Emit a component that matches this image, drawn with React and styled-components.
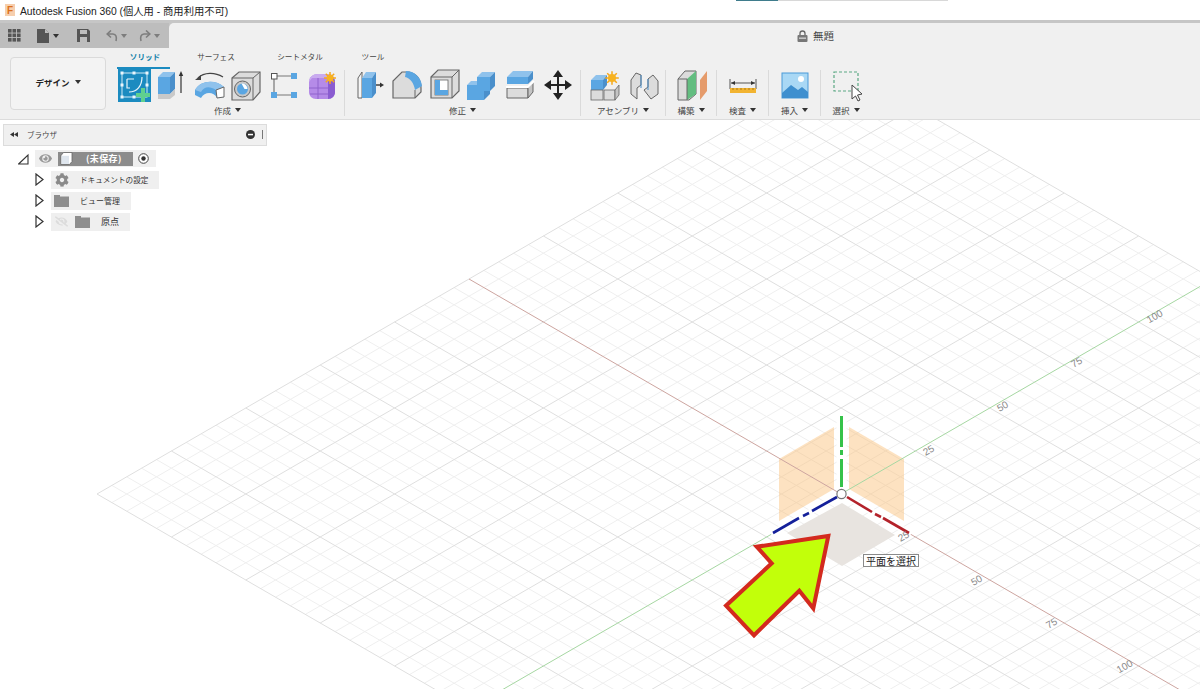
import React from "react";
import styled, { createGlobalStyle } from "styled-components";
import { FaCog, FaEye, FaEyeSlash } from "react-icons/fa";

const FONT = `"Noto Sans CJK JP", "Noto Sans", sans-serif`;

const GlobalStyle = createGlobalStyle`
  html, body {
    margin: 0;
    padding: 0;
    background: #fff;
  }
  body {
    font-family: ${FONT};
    color: #333;
  }
`;

const Page = styled.div`
  width: 1200px;
  height: 689px;
  display: flex;
  flex-direction: column;
  overflow: hidden;
  background: #fff;
`;

/* window title */
const TitleBar = styled.div`
  height: 20px;
  flex: none;
  position: relative;
  display: flex;
  align-items: center;
  gap: 5px;
  padding-left: 5px;
  background: #fff;
`;

const AppLogo = styled.div`
  width: 10px;
  height: 12px;
  display: flex;
  align-items: center;
  justify-content: center;
  background: #f6cfae;
  color: #dd6f1c;
  font: bold 10px "Liberation Sans", sans-serif;
`;

const WindowTitle = styled.div`
  font: 10.3px "Liberation Sans", "Noto Sans CJK JP", sans-serif;
  color: #222;
  white-space: nowrap;
`;

const TopEdge = styled.div`
  position: absolute;
  top: 0;
  left: 736px;
  width: 212px;
  height: 1px;
  background: #d8d8d8;
  &::before {
    content: "";
    display: block;
    width: 42px;
    height: 1px;
    background: #3f7c8c;
  }
`;

/* quick access row */
const QuickRow = styled.div`
  height: 28px;
  flex: none;
  display: flex;
  background: #c6c6c6;
`;

const QuickTools = styled.div`
  width: 169px;
  flex: none;
  padding-top: 3px;
  display: flex;
  align-items: center;
  background: linear-gradient(#c6c6c6 0 3px, #bdbdbd 3px);
`;

const QuickItem = styled.div`
  display: flex;
  align-items: center;
  gap: 3px;
  margin-left: ${(p) => p.$left}px;
`;

const Caret = styled.span`
  display: inline-block;
  width: 0;
  height: 0;
  border-left: 3px solid transparent;
  border-right: 3px solid transparent;
  border-top: 4px solid ${(p) => p.$color || "#333"};
`;

const DocTitleArea = styled.div`
  flex: 1;
  margin-top: 3px;
  padding-left: 628px;
  display: flex;
  align-items: center;
  gap: 5px;
  background: #f0f0f0;
  border-top-left-radius: 5px;
  font-size: 10.5px;
  color: #444;
`;

/* ribbon */
const Ribbon = styled.div`
  height: 71px;
  flex: none;
  display: flex;
  align-items: flex-start;
  padding-left: 10px;
  background: #f0f0f0;
  border-bottom: 1px solid #dcdcdc;
`;

const DesignButton = styled.div`
  width: 96px;
  height: 53px;
  box-sizing: border-box;
  margin: 9px 5px 0 0;
  padding-bottom: 3px;
  display: flex;
  align-items: center;
  justify-content: center;
  gap: 5px;
  background: #f3f3f3;
  border: 1px solid #dadada;
  border-radius: 4px;
  font-size: 8.5px;
  font-weight: 700;
  color: #222;
`;

const RibbonMain = styled.div`
  display: flex;
  flex-direction: column;
`;

const Tabs = styled.div`
  height: 20px;
  display: flex;
`;

const Tab = styled.div`
  width: ${(p) => p.$w}px;
  position: relative;
  display: flex;
  align-items: center;
  justify-content: center;
  padding-bottom: 4px;
  box-sizing: border-box;
  font-size: 7.6px;
  font-weight: ${(p) => (p.$active ? 700 : 400)};
  color: ${(p) => (p.$active ? "#0f7fa8" : "#444")};
  ${(p) =>
    p.$active &&
    `&::after {
      content: "";
      position: absolute;
      left: 6px;
      bottom: -1px;
      width: 53px;
      height: 2px;
      background: #1b8bc0;
    }`}
`;

const Groups = styled.div`
  display: flex;
  align-items: flex-start;
`;

const Group = styled.div`
  width: ${(p) => p.$w}px;
  display: flex;
  flex-direction: column;
  align-items: center;
`;

const IconRow = styled.div`
  height: 36px;
  display: flex;
  margin-left: ${(p) => p.$offset || 0}px;
`;

const ToolSlot = styled.div`
  width: 37.6px;
  display: flex;
  justify-content: center;
`;

const GroupLabel = styled.div`
  height: 15px;
  margin-top: -2px;
  display: flex;
  align-items: center;
  gap: 4px;
  font-size: 8.5px;
  color: #444;
  white-space: nowrap;
`;

const Divider = styled.div`
  width: 1px;
  height: 46px;
  margin-top: 2px;
  background: #dadada;
`;

/* canvas */
const Canvas = styled.div`
  position: relative;
  flex: 1;
  overflow: hidden;
`;

const Scene = styled.svg`
  display: block;
  width: 1200px;
  height: 569px;
`;

const AxisNumber = styled.text`
  font: 10px "Liberation Sans", sans-serif;
  fill: #8a8a8a;
  text-anchor: middle;
  dominant-baseline: middle;
`;

const Tip = styled.div`
  position: absolute;
  left: 863px;
  top: 434px;
  height: 13px;
  box-sizing: border-box;
  width: 56px;
  display: flex;
  align-items: center;
  justify-content: center;
  background: #fff;
  border: 1px solid #8a8a8a;
  font-size: 10px;
  line-height: 1;
  color: #222;
  white-space: nowrap;
`;

/* browser panel */
const BrowserPanel = styled.div`
  position: absolute;
  left: 3px;
  top: 4px;
  width: 264px;
  display: flex;
  flex-direction: column;
  gap: 4px;
`;

const BrowserHeader = styled.div`
  height: 22px;
  box-sizing: border-box;
  display: flex;
  align-items: center;
  padding: 0 3px 2px 6px;
  background: #f0f0f0;
  border: 1px solid #dcdcdc;
  font-size: 7.5px;
  color: #444;
`;

const HeaderTitle = styled.span`
  flex: 1;
  margin-left: 9px;
`;

const HeaderGrip = styled.span`
  width: 1px;
  height: 9px;
  margin-left: 7px;
  background: #777;
`;

const TreeRow = styled.div`
  height: 17px;
  display: flex;
  align-items: center;
  gap: ${(p) => (p.$root ? 6 : 7)}px;
  margin-left: ${(p) => (p.$root ? 15 : 32)}px;
`;

const Chip = styled.div`
  height: ${(p) => (p.$root ? 17 : 18)}px;
  display: flex;
  align-items: center;
  gap: ${(p) => (p.$root ? 5 : 11)}px;
  padding: ${(p) => (p.$root ? "0 7px 0 3px" : "0 11px 0 3px")};
  background: #efefef;
  font-size: 8px;
  color: #333;
  white-space: nowrap;
`;

const IconSlot = styled.span`
  width: 15px;
  display: flex;
  align-items: center;
  justify-content: center;
`;

const IconPair = styled.span`
  display: flex;
  gap: 6px;
`;

const RowLabel = styled.span`
  font-size: ${(p) => p.$size || 8}px;
`;

const DocPill = styled.div`
  width: 75px;
  height: 14px;
  display: flex;
  align-items: center;
  gap: 13px;
  padding-left: 2px;
  box-sizing: border-box;
  background: #8c8c8c;
  color: #fff;
  font-size: 9px;
  letter-spacing: 0.4px;
  font-weight: 700;
`;

/* icons */
const GRAY = "#dcdcdc";
const EDGE = "#666";
const BLUE = "#5aa6e2";
const BLUE_D = "#4a8fcb";
const BLUE_L = "#8fc2ec";

const Icon = ({ children }) => (
  <svg width="34" height="34" viewBox="0 0 34 34">
    {children}
  </svg>
);

const Sun = ({ x, y, r = 4 }) => {
  const rays = Array.from({ length: 8 }, (_, i) => (i * Math.PI) / 4);
  return (
    <g>
      {rays.map((a) => (
        <line
          key={a}
          x1={x}
          y1={y}
          x2={x + Math.cos(a) * r * 1.7}
          y2={y + Math.sin(a) * r * 1.7}
          stroke="#f5a81c"
          strokeWidth="1.5"
        />
      ))}
      <circle cx={x} cy={y} r={r} fill="#f7b21f" />
    </g>
  );
};

const SketchIcon = () => (
  <Icon>
    <rect x="1" y="0" width="33" height="34" fill="#1b8bc0" />
    <rect x="5" y="5" width="25" height="24" fill="none" stroke="#cfe9f6" strokeWidth="1" />
    <path d="M10 11h7M10 11v9h3M12 24c8 0 13-6 13-15" fill="none" stroke="#e8f5fb" strokeWidth="1.2" />
    {[[5, 5], [17, 5], [30, 5], [5, 17], [30, 17], [5, 29], [17, 29]].map(([x, y]) => (
      <rect key={`${x}-${y}`} x={x - 1.5} y={y - 1.5} width="3" height="3" fill="#eaf6fc" />
    ))}
    <path d="M24 20h4v5h5v4h-5v5h-4v-5h-5v-4h5z" fill="#5fd08f" />
  </Icon>
);

const ExtrudeIcon = () => (
  <Icon>
    <polygon points="4,9 9,4 21,4 16,9" fill={BLUE_L} />
    <polygon points="4,9 16,9 16,26 4,26" fill={BLUE} />
    <polygon points="16,9 21,4 21,21 16,26" fill={BLUE_D} />
    <polygon points="4,26 16,26 21,21 21,27 16,31 4,31" fill="#c9c9c9" />
    <path d="M27 25V7" stroke="#333" strokeWidth="1.2" />
    <polygon points="27,3 24.8,8 29.2,8" fill="#333" />
  </Icon>
);

const RevolveIcon = () => (
  <Icon>
    <path d="M6 10C12 4 23 4 31 9" fill="none" stroke="#444" strokeWidth="1.2" />
    <polygon points="3,12 9,7 9,12" fill="#444" />
    <path d="M3 22C8 12 24 11 32 19V29L25 30C22 24 13 23 9 30L3 27z" fill={BLUE} />
    <path d="M3 22C8 12 24 11 32 19L24 22C18 18 12 18 9 24z" fill={BLUE_L} />
    <polygon points="24,22 32,19 32,29 25,30" fill="#fff" stroke={EDGE} strokeWidth="1" />
  </Icon>
);

const HoleIcon = () => (
  <Icon>
    <polygon points="3,10 10,4 31,4 31,24 24,32 3,32" fill={GRAY} stroke={EDGE} strokeWidth="1.2" />
    <path d="M3 10H24V32M24 10L31 4" fill="none" stroke={EDGE} strokeWidth="1" />
    <circle cx="13.5" cy="21" r="8" fill="#c7c7c7" stroke={EDGE} strokeWidth="1" />
    <circle cx="13.5" cy="21" r="5.5" fill={BLUE} />
    <path d="M12.5 15.6a5.5 5.5 0 0 1 6 5.4h-3z" fill="#fff" />
  </Icon>
);

const PatternIcon = () => (
  <Icon>
    <path d="M10 8H24M7 11V24M10 27H24" stroke="#777" strokeWidth="1.2" />
    <rect x="4.5" y="5.5" width="5.5" height="5.5" fill="#fff" stroke="#555" strokeWidth="1" />
    <rect x="24" y="5" width="6" height="6" fill={BLUE} />
    <rect x="4" y="24" width="6" height="6" fill={BLUE} />
    <rect x="24" y="24" width="6" height="6" fill={BLUE} />
  </Icon>
);

const FormIcon = () => (
  <Icon>
    <path d="M5 14C5 9 9 6 14 6H24C28 6 31 9 31 14V24C31 28 28 31 24 31H12C8 31 5 28 5 24z" fill="#b58be8" />
    <path d="M24 9C28 9 31 10 31 14V24C31 28 28 31 24 31z" fill="#8a5cd0" />
    <path d="M5 14C5 9 9 6 14 6H24C28 6 31 9 27 10H8z" fill="#c9abef" />
    <path d="M5 20H24M6 26H24M14 10V31" stroke="#8f63cc" strokeWidth="1" fill="none" />
    <Sun x={26} y={10} r={3.5} />
  </Icon>
);

const PressPullIcon = () => (
  <Icon>
    <polygon points="4,10 8,4 8,30 4,30" fill="#f5f5f5" stroke={EDGE} strokeWidth="1" />
    <polygon points="8,10 12,4 22,4 18,10" fill={BLUE_L} />
    <polygon points="8,10 18,10 18,30 8,30" fill={BLUE} />
    <polygon points="18,10 22,4 22,25 18,30" fill={BLUE_D} />
    <path d="M22 17H27" stroke="#333" strokeWidth="1.4" />
    <polygon points="30,17 26,14.5 26,19.5" fill="#333" />
  </Icon>
);

const FilletIcon = () => (
  <Icon>
    <path d="M2 30V13L11 4H18C26 6 30 12 30 20V24L24 30z" fill={GRAY} stroke={EDGE} strokeWidth="1.2" />
    <path d="M15 3C23 3 30 9 31 18L24 22C23 15 19 10 14 9z" fill={BLUE} />
    <path d="M24 22V30" stroke={EDGE} strokeWidth="1" />
  </Icon>
);

const ShellIcon = () => (
  <Icon>
    <polygon points="2,9 9,2 30,2 30,23 23,30 2,30" fill={GRAY} stroke={EDGE} strokeWidth="1.2" />
    <path d="M2 9H23V30M23 9L30 2" fill="none" stroke={EDGE} strokeWidth="1" />
    <rect x="6" y="12" width="13" height="15" fill="#fff" stroke={EDGE} strokeWidth="0.8" />
    <polygon points="6,12 11,12 11,22 19,22 19,27 6,27" fill={BLUE} />
  </Icon>
);

const CombineIcon = () => (
  <Icon>
    <polygon points="11,9 16,4 29,4 24,9" fill={BLUE_L} />
    <polygon points="11,9 24,9 24,23 18,23 18,17 11,17" fill={BLUE} />
    <polygon points="24,9 29,4 29,18 24,23" fill={BLUE_D} />
    <polygon points="1,17 5,13 11,13 11,17" fill={BLUE_L} />
    <polygon points="1,17 18,17 18,32 1,32" fill={BLUE} />
    <polygon points="18,23 24,23 24,26 18,32" fill={BLUE_D} />
  </Icon>
);

const SplitIcon = () => (
  <Icon>
    <polygon points="3,9 9,3 29,3 24,9" fill={BLUE_L} />
    <polygon points="3,9 24,9 24,16 3,16" fill={BLUE} />
    <polygon points="24,9 29,3 29,11 24,16" fill={BLUE_D} />
    <polygon points="3,20 24,20 24,30 3,30" fill={GRAY} stroke={EDGE} strokeWidth="1" />
    <polygon points="24,20 29,14 29,24 24,30" fill="#c4c4c4" stroke={EDGE} strokeWidth="1" />
    <path d="M2 19H24L30 13" fill="none" stroke="#fff" strokeWidth="2" />
  </Icon>
);

const MoveIcon = () => (
  <Icon>
    <path d="M17 6V28M6 17H28" stroke="#222" strokeWidth="2" />
    <polygon points="17,2 12,9 22,9" fill="#222" />
    <polygon points="17,32 12,25 22,25" fill="#222" />
    <polygon points="3,17 10,12 10,22" fill="#222" />
    <polygon points="31,17 24,12 24,22" fill="#222" />
  </Icon>
);

const AssemblyIcon = () => (
  <Icon>
    <polygon points="2,12 7,7 18,7 14,12" fill={BLUE_L} />
    <rect x="2" y="12" width="12" height="10" fill={BLUE} />
    <polygon points="14,12 18,7 18,17 14,22" fill={BLUE_D} />
    <rect x="2" y="22" width="12" height="10" fill={GRAY} stroke={EDGE} strokeWidth="0.8" />
    <rect x="15" y="22" width="11" height="10" fill={GRAY} stroke={EDGE} strokeWidth="0.8" />
    <polygon points="26,22 30,17 30,27 26,32" fill="#c4c4c4" stroke={EDGE} strokeWidth="0.8" />
    <Sun x={23} y={10} r={4} />
  </Icon>
);

const JointIcon = () => (
  <Icon>
    <path d="M4 12L9 5 14 7V17L10 20V31L4 26z" fill={GRAY} stroke={EDGE} strokeWidth="1" />
    <path d="M31 13L26 7 21 11V19L17 22 24 31 31 26z" fill={GRAY} stroke={EDGE} strokeWidth="1" />
    <path d="M14 7V20M21 11V22" stroke={BLUE_D} strokeWidth="1" />
  </Icon>
);

const ConstructIcon = () => (
  <Icon>
    <polygon points="2,11 9,3 20,3 20,26 13,32 2,32" fill={GRAY} stroke={EDGE} strokeWidth="1" />
    <polygon points="11,11 20,3 20,26 11,32" fill="#63bd80" />
    <path d="M2 11H11V32" fill="none" stroke={EDGE} strokeWidth="1" />
    <polygon points="24,12 31,3 31,23 24,32" fill="#e59b6b" />
  </Icon>
);

const RulerIcon = () => (
  <Icon>
    <path d="M4 11V21M30 11V21M5 15H29" stroke="#555" strokeWidth="1" />
    <polygon points="5,15 9,13 9,17" fill="#333" />
    <polygon points="29,15 25,13 25,17" fill="#333" />
    <rect x="4" y="20" width="26" height="5" fill="#f2b431" />
    <path d="M7 20v2M11 20v2M15 20v2M19 20v2M23 20v2M27 20v2" stroke="#9c6c10" strokeWidth="0.8" />
  </Icon>
);

const PictureIcon = () => (
  <Icon>
    <rect x="4" y="5" width="26" height="25" fill="#a9d8f5" stroke="#4a9ad8" strokeWidth="1" />
    <circle cx="23" cy="11" r="3" fill="#fff" />
    <path d="M4 25L13 17 20 22 24 19 30 24V30H4z" fill="#3e8fcf" />
  </Icon>
);

const SelectIcon = () => (
  <Icon>
    <rect x="5" y="4" width="24" height="19" fill="none" stroke="#5aa883" strokeWidth="1.2" strokeDasharray="3 2" />
    <polygon points="23,17 23,31 26.5,28 29,33 31,32 28.5,27 33,26" fill="#fff" stroke="#444" strokeWidth="1" />
  </Icon>
);

const GridDots = () => (
  <svg width="13" height="13" viewBox="0 0 13 13" fill="#555">
    {[0, 4.5, 9].flatMap((y) =>
      [0, 4.5, 9].map((x) => <rect key={`${x}-${y}`} x={x} y={y} width="3.6" height="3.6" />)
    )}
  </svg>
);

const FileGlyph = () => (
  <svg width="13" height="14" viewBox="0 0 13 14">
    <path d="M0 0H8L12 4V14H0z" fill="#555" />
    <path d="M8 0V4H12" fill="#bdbdbd" />
  </svg>
);

const SaveGlyph = () => (
  <svg width="13" height="13" viewBox="0 0 13 13">
    <path d="M0 0H11L13 2V13H0z" fill="#555" />
    <rect x="3" y="1" width="7" height="4" fill="#bdbdbd" />
    <rect x="3" y="8" width="7" height="5" fill="#bdbdbd" />
  </svg>
);

const ArrowGlyph = ({ flip }) => (
  <svg width="12" height="12" viewBox="0 0 12 12" style={flip ? { transform: "scaleX(-1)" } : undefined}>
    <path d="M2 4H7C10 4 11 7 10 11" fill="none" stroke="#7d7d7d" strokeWidth="1.6" />
    <path d="M5 0.5L1.2 4 5 7.5" fill="none" stroke="#7d7d7d" strokeWidth="1.6" />
  </svg>
);

const LockGlyph = () => (
  <svg width="11" height="12" viewBox="0 0 11 12">
    <path d="M3 5V3.5a2.5 2.5 0 0 1 5 0V5" fill="none" stroke="#666" strokeWidth="1.3" />
    <rect x="0.5" y="5" width="10" height="7" rx="1" fill="#777" />
    <rect x="2" y="7.6" width="7" height="1.1" fill="#e6e6e6" />
  </svg>
);

const CollapseGlyph = () => (
  <svg width="8" height="7" viewBox="0 0 8 7" fill="#333">
    <polygon points="0,3.5 4,1 4,6" />
    <polygon points="4,3.5 8,1 8,6" />
  </svg>
);

const MinusGlyph = () => (
  <svg width="9" height="9" viewBox="0 0 9 9">
    <circle cx="4.5" cy="4.5" r="4.5" fill="#333" />
    <rect x="2" y="3.8" width="5" height="1.5" fill="#fff" />
  </svg>
);

const RootToggle = () => (
  <svg width="11" height="12" viewBox="0 0 11 12">
    <polygon points="0.6,11 10,2 10,11" fill="#fff" stroke="#333" strokeWidth="1.1" />
  </svg>
);

const Toggle = () => (
  <svg width="9" height="13" viewBox="0 0 9 13">
    <polygon points="1,1 8,6.5 1,12" fill="#fff" stroke="#333" strokeWidth="1.2" />
  </svg>
);

const Folder = () => (
  <svg width="15" height="12" viewBox="0 0 15 12" fill="#8e8e8e">
    <path d="M0 0H6V1.5H15V12H0z" />
  </svg>
);

const CubeGlyph = () => (
  <svg width="13" height="13" viewBox="0 0 13 13">
    <polygon points="1,3.5 3.5,0.5 12,0.5 12,9.5 9.5,12.5 1,12.5" fill="#fff" stroke="#666" strokeWidth="0.8" />
    <polygon points="1.5,3.8 9,3.8 9,12 1.5,12" fill="#dfe6ee" />
  </svg>
);

const RadioGlyph = () => (
  <svg width="11" height="11" viewBox="0 0 11 11">
    <circle cx="5.5" cy="5.5" r="4.8" fill="#fff" stroke="#444" strokeWidth="1" />
    <circle cx="5.5" cy="5.5" r="2.2" fill="#333" />
  </svg>
);

/* isometric grid, u runs along red, v along green */
const OX = 841;
const OY = 494;
const iso = (u, v) => [OX + (u + v) * 2.976, OY + (u - v) * 1.72];
const SPAN = 125;
const STEPS = Array.from({ length: 51 }, (_, i) => -SPAN + i * 5);

const GridLines = ({ major }) => (
  <g stroke={major ? "#dfdfdf" : "#efefef"} strokeWidth="1">
    {STEPS.filter((s) => s !== 0 && (s % 25 === 0) === major).map((s) => {
      const [a, b] = iso(s, -SPAN);
      const [c, d] = iso(s, SPAN);
      const [e, f] = iso(-SPAN, s);
      const [g, h] = iso(SPAN, s);
      return (
        <g key={s}>
          <line x1={a} y1={b} x2={c} y2={d} />
          <line x1={e} y1={f} x2={g} y2={h} />
        </g>
      );
    })}
  </g>
);

const axisNumbers = [
  { x: 929, y: 451, t: "25" },
  { x: 1003, y: 407, t: "50" },
  { x: 1077, y: 363, t: "75" },
  { x: 1155, y: 317, t: "100" },
  { x: 904, y: 537, t: "25" },
  { x: 977, y: 581, t: "50" },
  { x: 1052, y: 624, t: "75" },
  { x: 1125, y: 667, t: "100" },
];

const thickAxes = [
  { stroke: "#35c24a", w: 3, segs: [[841.5, 416, 841.5, 447], [841.5, 450, 841.5, 455], [841.5, 459, 841.5, 487]] },
  { stroke: "#14209a", w: 2.6, segs: [[773, 533, 799, 518], [803, 516, 809, 513], [812, 511, 837, 497]] },
  { stroke: "#b3222a", w: 2.6, segs: [[847, 497, 872, 512], [875, 514, 881, 517], [883, 518, 909, 533]] },
];

const ViewScene = () => {
  const [r1, r2] = [iso(-SPAN, 0), iso(SPAN, 0)];
  const [g1, g2] = [iso(0, -SPAN), iso(0, SPAN)];
  return (
    <Scene viewBox="0 120 1200 569">
      <GridLines major={false} />
      <GridLines major />
      <polygon points="834,427 834,489 779,521 779,459" fill="#f9b765" fillOpacity="0.4" />
      <polygon points="849,427 849,489 904,521 904,459" fill="#f9b765" fillOpacity="0.4" />
      <line x1={r1[0]} y1={r1[1]} x2={r2[0]} y2={r2[1]} stroke="#cda5a0" strokeWidth="1" />
      <line x1={g1[0]} y1={g1[1]} x2={g2[0]} y2={g2[1]} stroke="#a6d7a2" strokeWidth="1" />
      <polygon points="842,503 895,535 842,566 787,533" fill="#e8e4e0" />
      <line x1="841.5" y1="412" x2="841.5" y2="490" stroke="#fff" strokeWidth="10" />
      <line x1="771" y1="534" x2="838" y2="496" stroke="#fff" strokeWidth="6" />
      <line x1="845" y1="496" x2="911" y2="534" stroke="#fff" strokeWidth="6" />
      {thickAxes.map((axis) =>
        axis.segs.map(([x1, y1, x2, y2]) => (
          <line key={`${x1}-${y1}`} x1={x1} y1={y1} x2={x2} y2={y2} stroke={axis.stroke} strokeWidth={axis.w} />
        ))
      )}
      <circle cx="841.5" cy="494" r="4.6" fill="#fff" stroke="#777" strokeWidth="1.2" />
      {axisNumbers.map((n) => (
        <AxisNumber key={`${n.x}`} x={n.x} y={n.y} transform={`rotate(-30 ${n.x} ${n.y})`}>
          {n.t}
        </AxisNumber>
      ))}
      <polygon
        points="828.3,536 813.3,608.3 799.3,590.7 754,635.3 726,605.7 771.7,563.3 756.7,546.7"
        fill="#c2ff0a"
        stroke="#d32a1e"
        strokeWidth="4"
      />
    </Scene>
  );
};

const groups = [
  { w: 233, label: "作成", icons: [SketchIcon, ExtrudeIcon, RevolveIcon, HoleIcon, PatternIcon, FormIcon] },
  { w: 235, offset: 4, label: "修正", icons: [PressPullIcon, FilletIcon, ShellIcon, CombineIcon, SplitIcon, MoveIcon] },
  { w: 84, offset: 4, label: "アセンブリ", icons: [AssemblyIcon, JointIcon] },
  { w: 50, offset: 4, label: "構築", icons: [ConstructIcon] },
  { w: 51, label: "検査", icons: [RulerIcon] },
  { w: 51, label: "挿入", icons: [PictureIcon] },
  { w: 50, label: "選択", icons: [SelectIcon] },
];

const tabs = [
  { w: 68, label: "ソリッド", active: true },
  { w: 74, label: "サーフェス" },
  { w: 94, label: "シートメタル" },
  { w: 52, label: "ツール" },
];

export default function App() {
  return (
    <Page>
      <GlobalStyle />
      <TitleBar>
        <AppLogo>F</AppLogo>
        <WindowTitle>Autodesk Fusion 360 (個人用 - 商用利用不可)</WindowTitle>
        <TopEdge />
      </TitleBar>

      <QuickRow>
        <QuickTools>
          <QuickItem $left={8}>
            <GridDots />
          </QuickItem>
          <QuickItem $left={16}>
            <FileGlyph />
            <Caret />
          </QuickItem>
          <QuickItem $left={18}>
            <SaveGlyph />
          </QuickItem>
          <QuickItem $left={16}>
            <ArrowGlyph />
            <Caret $color="#7d7d7d" />
          </QuickItem>
          <QuickItem $left={12}>
            <ArrowGlyph flip />
            <Caret $color="#7d7d7d" />
          </QuickItem>
        </QuickTools>
        <DocTitleArea>
          <LockGlyph />
          無題
        </DocTitleArea>
      </QuickRow>

      <Ribbon>
        <DesignButton>
          デザイン <Caret />
        </DesignButton>
        <RibbonMain>
          <Tabs>
            {tabs.map((tab) => (
              <Tab key={tab.label} $w={tab.w} $active={tab.active}>
                {tab.label}
              </Tab>
            ))}
          </Tabs>
          <Groups>
            {groups.map((group, i) => (
              <React.Fragment key={group.label}>
                <Group $w={group.w}>
                  <IconRow $offset={group.offset}>
                    {group.icons.map((ToolIcon, j) => (
                      <ToolSlot key={j}>
                        <ToolIcon />
                      </ToolSlot>
                    ))}
                  </IconRow>
                  <GroupLabel>
                    {group.label} <Caret />
                  </GroupLabel>
                </Group>
                {i < groups.length - 1 && <Divider />}
              </React.Fragment>
            ))}
          </Groups>
        </RibbonMain>
      </Ribbon>

      <Canvas>
        <ViewScene />
        <Tip>平面を選択</Tip>
        <BrowserPanel>
          <BrowserHeader>
            <CollapseGlyph />
            <HeaderTitle>ブラウザ</HeaderTitle>
            <MinusGlyph />
            <HeaderGrip />
          </BrowserHeader>
          <TreeRow $root>
            <RootToggle />
            <Chip $root>
              <IconSlot>
                <FaEye size={13} color="#999" />
              </IconSlot>
              <DocPill>
                <CubeGlyph />
                (未保存)
              </DocPill>
              <RadioGlyph />
            </Chip>
          </TreeRow>
          <TreeRow>
            <Toggle />
            <Chip>
              <IconSlot>
                <FaCog size={14} color="#8a8a8a" />
              </IconSlot>
              <RowLabel $size={7.6}>ドキュメントの設定</RowLabel>
            </Chip>
          </TreeRow>
          <TreeRow>
            <Toggle />
            <Chip>
              <IconSlot>
                <Folder />
              </IconSlot>
              <RowLabel>ビュー管理</RowLabel>
            </Chip>
          </TreeRow>
          <TreeRow>
            <Toggle />
            <Chip>
              <IconPair>
                <IconSlot>
                  <FaEyeSlash size={13} color="#dcdcdc" />
                </IconSlot>
                <IconSlot>
                  <Folder />
                </IconSlot>
              </IconPair>
              <RowLabel $size={9}>原点</RowLabel>
            </Chip>
          </TreeRow>
        </BrowserPanel>
      </Canvas>
    </Page>
  );
}
